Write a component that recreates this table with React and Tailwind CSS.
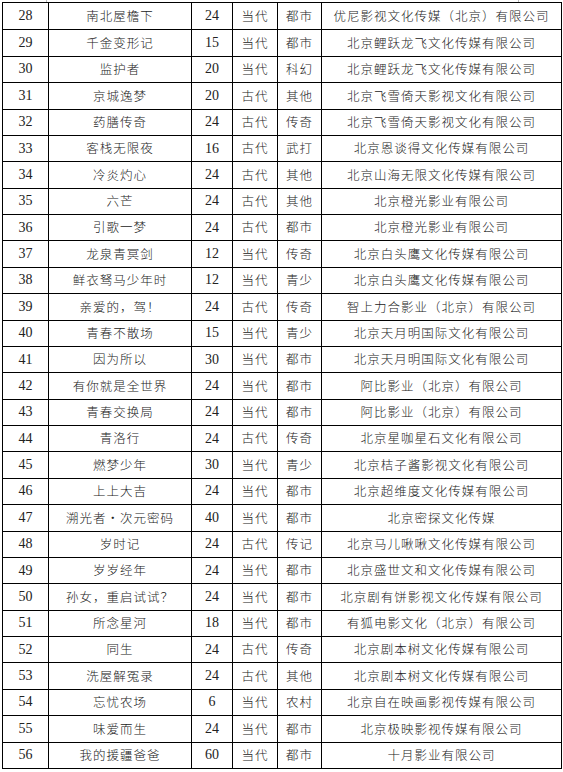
import React from "react";

// 剧目列表（续表）
const ROWS = [
  [28, "南北屋檐下", 24, "当代", "都市", "优尼影视文化传媒（北京）有限公司"],
  [29, "千金变形记", 15, "当代", "都市", "北京鲤跃龙飞文化传媒有限公司"],
  [30, "监护者", 20, "当代", "科幻", "北京鲤跃龙飞文化传媒有限公司"],
  [31, "京城逸梦", 20, "古代", "其他", "北京飞雪倚天影视文化有限公司"],
  [32, "药膳传奇", 24, "古代", "传奇", "北京飞雪倚天影视文化有限公司"],
  [33, "客栈无限夜", 16, "古代", "武打", "北京恩谈得文化传媒有限公司"],
  [34, "冷炎灼心", 24, "古代", "其他", "北京山海无限文化传媒有限公司"],
  [35, "六芒", 24, "古代", "其他", "北京橙光影业有限公司"],
  [36, "引歌一梦", 24, "古代", "都市", "北京橙光影业有限公司"],
  [37, "龙泉青冥剑", 12, "当代", "传奇", "北京白头鹰文化传媒有限公司"],
  [38, "鲜衣驽马少年时", 12, "当代", "青少", "北京白头鹰文化传媒有限公司"],
  [39, "亲爱的，驾！", 24, "古代", "传奇", "智上力合影业（北京）有限公司"],
  [40, "青春不散场", 15, "当代", "青少", "北京天月明国际文化有限公司"],
  [41, "因为所以", 30, "当代", "都市", "北京天月明国际文化有限公司"],
  [42, "有你就是全世界", 24, "当代", "都市", "阿比影业（北京）有限公司"],
  [43, "青春交换局", 24, "当代", "都市", "阿比影业（北京）有限公司"],
  [44, "青洛行", 24, "古代", "传奇", "北京星咖星石文化有限公司"],
  [45, "燃梦少年", 30, "当代", "青少", "北京桔子酱影视文化有限公司"],
  [46, "上上大吉", 24, "当代", "都市", "北京超维度文化传媒有限公司"],
  [47, "溯光者・次元密码", 40, "当代", "都市", "北京密探文化传媒"],
  [48, "岁时记", 24, "古代", "传记", "北京马儿啾啾文化传媒有限公司"],
  [49, "岁岁经年", 24, "当代", "都市", "北京盛世文和文化传媒有限公司"],
  [50, "孙女，重启试试？", 24, "当代", "都市", "北京剧有饼影视文化传媒有限公司"],
  [51, "所念星河", 18, "当代", "都市", "有狐电影文化（北京）有限公司"],
  [52, "同生", 24, "古代", "传奇", "北京剧本树文化传媒有限公司"],
  [53, "洗屋解冤录", 24, "古代", "其他", "北京剧本树文化传媒有限公司"],
  [54, "忘忧农场", 6, "当代", "农村", "北京自在映画影视传媒有限公司"],
  [55, "味爱而生", 24, "当代", "都市", "北京极映影视传媒有限公司"],
  [56, "我的援疆爸爸", 60, "当代", "都市", "十月影业有限公司"],
];

const num = "font-['Liberation_Serif',serif] text-[14px]";
const cjk = "font-['Noto_Sans_CJK_SC',sans-serif] text-[12.5px] tracking-[1px] font-light";

export default function App() {
  return (
    <div className="w-[563px] h-[772px] bg-white text-[#222]">
      {/* page corner marks */}
      <div className="flex h-[2px]">
        <div className="ml-[46px] w-px h-[2px] bg-[#bbb]" />
        <div className="ml-[471px] w-px h-[2px] bg-[#bbb]" />
      </div>
      <div className="ml-[2px] w-[560px] border border-black">
        {ROWS.map((r, i) => (
          <div
            key={r[0]}
            className={
              "flex h-[26.38px] items-center leading-none " +
              (i > 0 ? "border-t border-black" : "")
            }
          >
            <div className={"w-[46px] h-full flex items-center justify-center border-r border-black " + num}>
              {r[0]}
            </div>
            <div className={"w-[143px] h-full flex items-center justify-center border-r border-black " + cjk}>
              {r[1]}
            </div>
            <div className={"w-[41px] h-full flex items-center justify-center border-r border-black " + num}>
              {r[2]}
            </div>
            <div className={"w-[45px] h-full flex items-center justify-center border-r border-black " + cjk}>
              {r[3]}
            </div>
            <div className={"w-[44px] h-full flex items-center justify-center border-r border-black " + cjk}>
              {r[4]}
            </div>
            <div className={"flex-1 h-full flex items-center justify-center " + cjk}>
              {r[5]}
            </div>
          </div>
        ))}
      </div>
    </div>
  );
}
